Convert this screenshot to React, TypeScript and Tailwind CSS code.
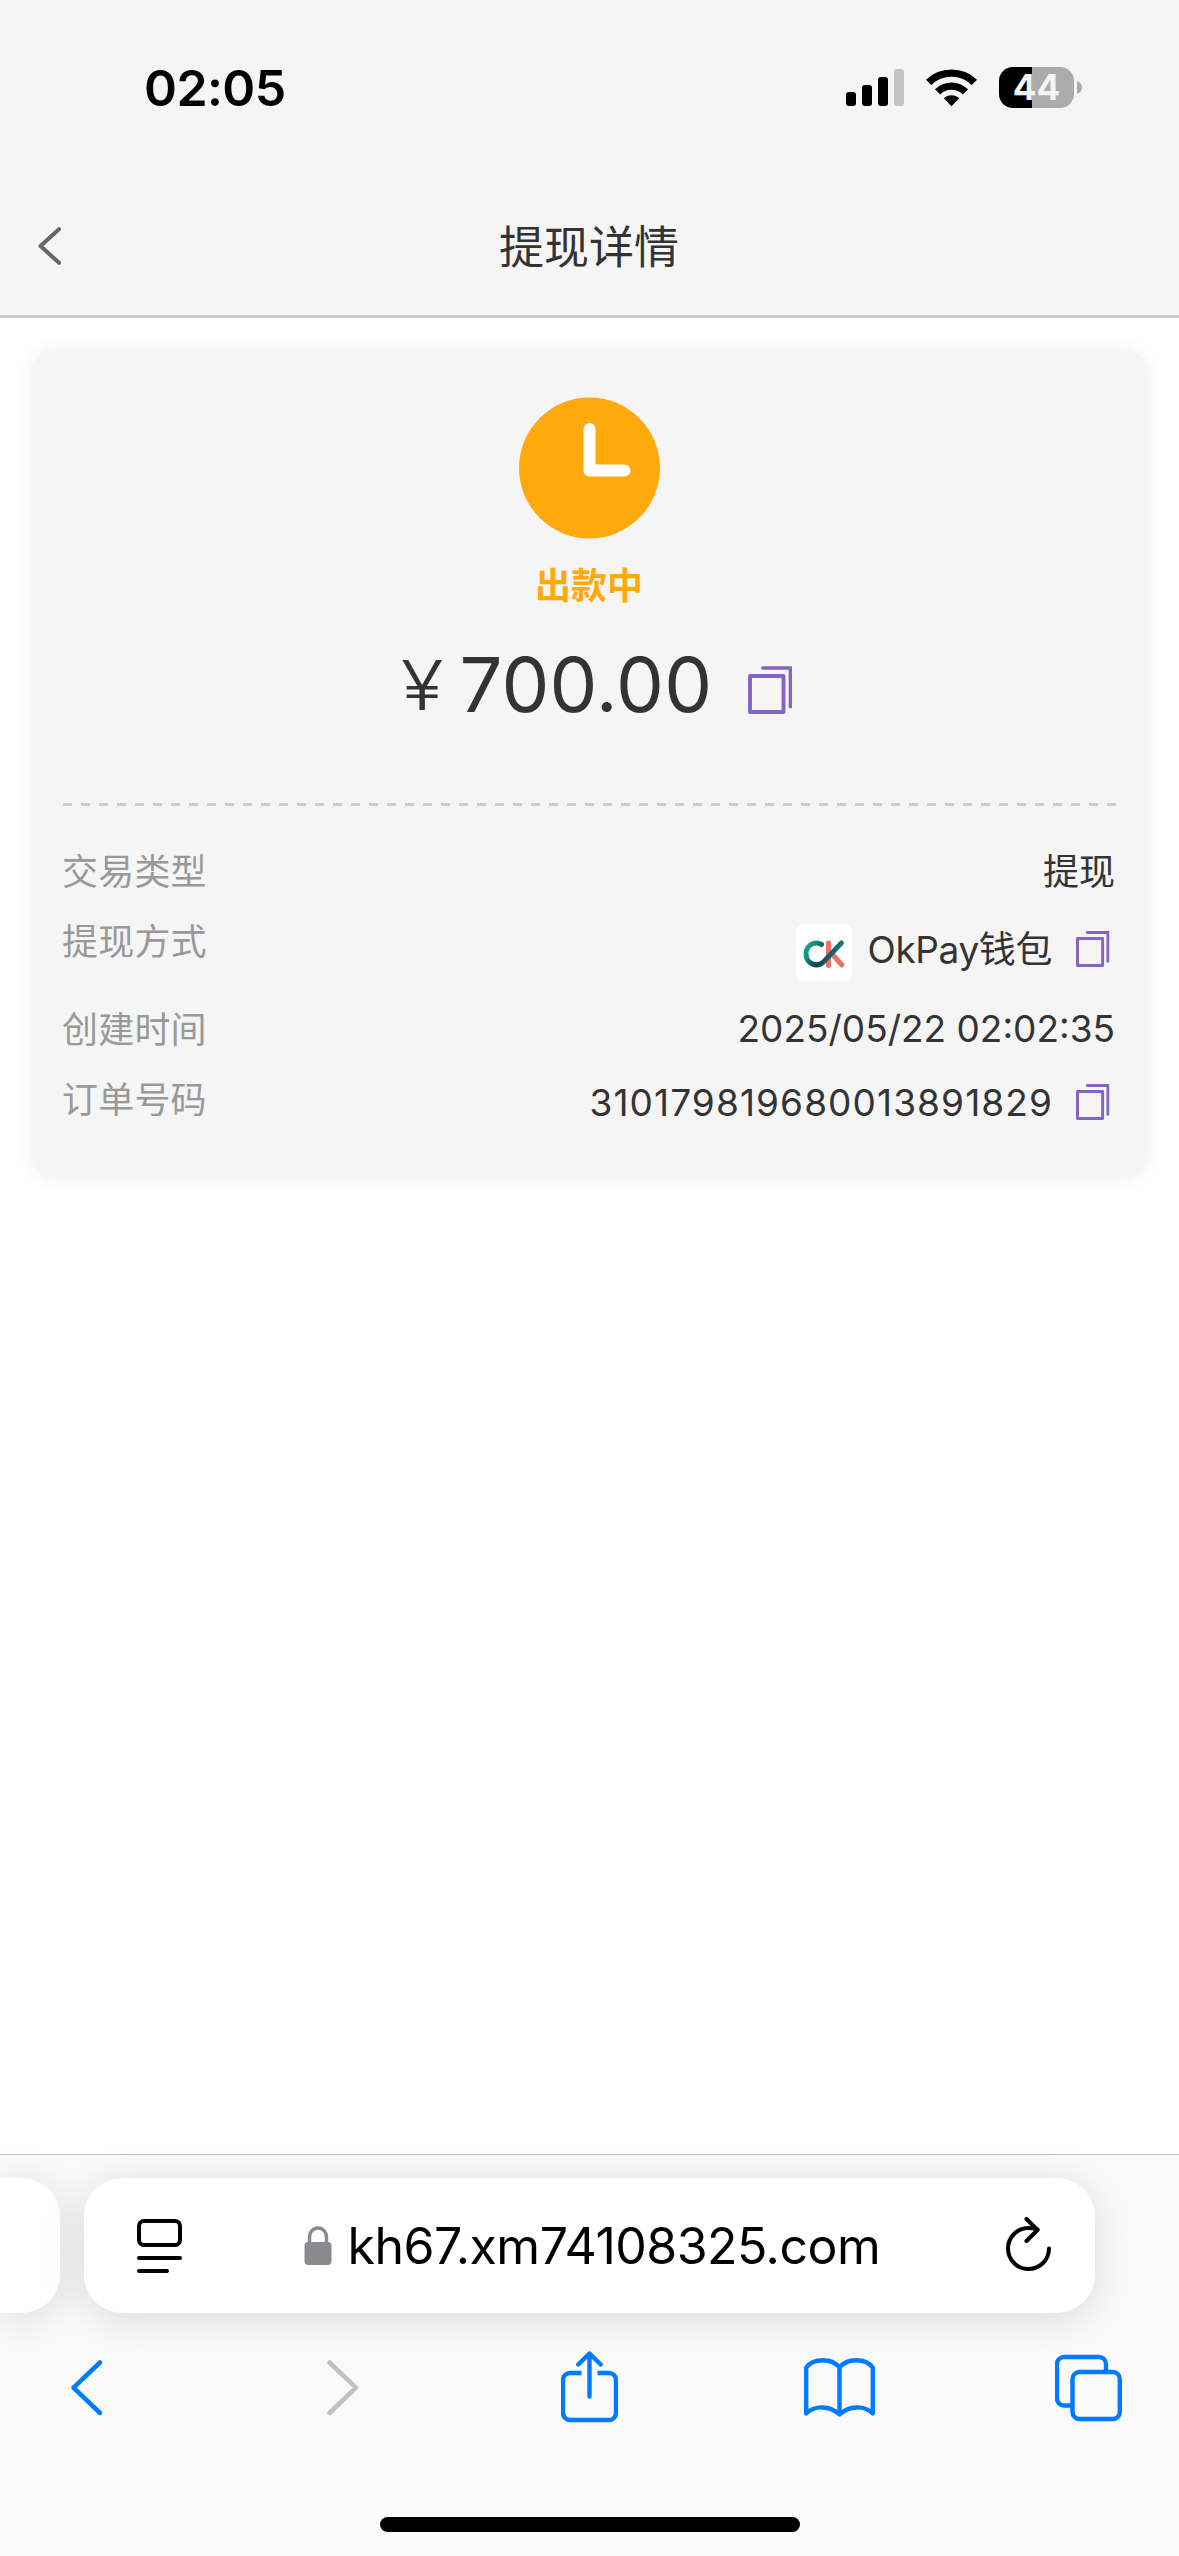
import type { ReactNode } from 'react'

type RowProps = {
  label: string
  className: string
  children: ReactNode
}

type CopyIconProps = {
  className: string
}

const CopyIcon = ({ className }: CopyIconProps) => (
  <svg viewBox="0 0 44 48" fill="none" stroke="#8465c3" className={className}>
    <path d="M2 10h33.500v36H2z" strokeWidth="3.9" strokeLinejoin="round" />
    <path d="M15 2h27.500v38.500" strokeWidth="3.7" strokeLinecap="round" />
  </svg>
)

const OkPayLogo = () => (
  <svg viewBox="0 0 56 57" className="w-14 h-[57px]" fill="none">
    <defs>
      <linearGradient id="ok-c" x1="8" y1="16" x2="48" y2="40" gradientUnits="userSpaceOnUse">
        <stop offset="0" stopColor="#1bb596" />
        <stop offset="0.25" stopColor="#128c80" />
        <stop offset="0.5" stopColor="#0c3f58" />
        <stop offset="0.68" stopColor="#1b6470" />
        <stop offset="1" stopColor="#56c9af" />
      </linearGradient>
    </defs>
    <rect width="56" height="57" rx="7" fill="#fff" />
    <path d="M32.500 19v22.500" stroke="#ee7061" strokeWidth="5" strokeLinecap="round" />
    <path d="M36 30l10 11" stroke="#e9705f" strokeWidth="5" strokeLinecap="round" />
    <path
      d="M25.500 20.500C19 16.500 10 21 10 30c0 10 11 13.500 17 8.500L45.500 19"
      stroke="url(#ok-c)"
      strokeWidth="5"
      strokeLinecap="round"
    />
  </svg>
)

const StatusBar = () => (
  <div className="h-[180px] pt-[57px] pl-[144px] pr-[97px] flex items-start justify-between">
    <span className="text-[50px] leading-[62px] font-semibold text-black tracking-[-0.6px]">
      02:05
    </span>
    <div className="flex items-start mt-2.5">
      <svg viewBox="0 0 58 41" className="w-[58px] h-[41px]">
        <rect x="0" y="25" width="10" height="14" rx="3" />
        <rect x="16" y="18" width="10" height="21" rx="3" />
        <rect x="32" y="10" width="10" height="29" rx="3" />
        <rect x="48" y="2" width="10" height="37" rx="3" fill="#c4c4c4" />
      </svg>
      <svg viewBox="0 0 51 41" className="w-[51px] h-[41px] ml-[22px]">
        <path d="M0 12.800a36.500 36.500 0 0 1 51 0l-5.200 5.200a29 29 0 0 0-40.600 0z" />
        <path d="M9 22.200a23.500 23.500 0 0 1 33 0l-5.200 5.200a16.200 16.200 0 0 0-22.600 0z" />
        <path d="M17.800 31.300a11 11 0 0 1 15.400 0L25.500 39.300z" />
      </svg>
      <div className="ml-[22px] w-[75px] h-[41px] rounded-[14px] bg-[linear-gradient(to_right,#000_33px,#ababab_33px)] flex items-center justify-center">
        <span className="text-[35px] leading-[41px] font-bold text-[#f5f5f5]">44</span>
      </div>
      <svg viewBox="0 0 5 13" className="w-[5px] h-[13px] mt-3.5 ml-[3px]">
        <path d="M0 0c3 1.200 5 3.500 5 6.500S3 11.800 0 13z" fill="#ababab" />
      </svg>
    </div>
  </div>
)

const Header = () => (
  <header className="h-[318px] bg-[#f5f5f5] border-b-3 border-[#cdcdcd]">
    <StatusBar />
    <div className="h-[135px] pl-[37px] grid grid-cols-[60px_1fr_98px] items-center">
      <svg viewBox="0 0 24 38" className="w-6 h-[38px] mb-1" fill="none">
        <path
          d="M22 2.200L3.500 19 22 35.800"
          stroke="#666"
          strokeWidth="4"
          strokeLinecap="round"
          strokeLinejoin="round"
        />
      </svg>
      <h1 className="text-center text-[45px] leading-[60px] text-[#333]">提现详情</h1>
    </div>
  </header>
)

const Row = ({ label, className, children }: RowProps) => (
  <div className={`flex justify-between items-start ${className}`}>
    <span className="-ml-px text-[36px] leading-[56px] tracking-[0.2px] text-[#999]">{label}</span>
    <div className="flex items-center mr-px text-[37px] leading-[54px] text-[#333]">{children}</div>
  </div>
)

const DetailCard = () => (
  <section className="mx-[31px] mt-8 h-[828px] px-8 pt-[47px] rounded-[22px] bg-[#f5f5f5] shadow-[0_0_18px_rgba(0,0,0,0.06)]">
    <div className="flex flex-col items-center">
      <svg viewBox="0 0 142 142" className="w-[142px] h-[142px]" fill="none">
        <circle cx="70.500" cy="71" r="70.500" fill="#ffa90d" />
        <path
          d="M70.500 32V73.500h35"
          stroke="#fff"
          strokeWidth="12"
          strokeLinecap="round"
          strokeLinejoin="round"
        />
      </svg>
      <p className="mt-5 mr-px text-[36px] leading-[54px] font-bold text-[#ffa90d]">出款中</p>
      <div className="mt-6 ml-3.5 h-[100px] flex items-center text-[#333]">
        <span className="mb-1 text-[68px] leading-[90px] font-light origin-left scale-x-115">¥</span>
        <span className="mb-1.5 ml-[22px] text-[76px] leading-[90px] tracking-[0.2px]">700.00</span>
        <CopyIcon className="w-11 h-12 ml-9 mt-1.5" />
      </div>
    </div>
    <div className="mt-[66px] h-[3px] bg-[repeating-linear-gradient(to_right,#cdcdcd_0_9px,transparent_9px_18px)]" />
    <Row label="交易类型" className="mt-[38px] h-[70px]">
      <span className="mt-px text-[36px]">提现</span>
    </Row>
    <Row label="提现方式" className="h-[88px]">
      <div className="mt-2.5">
        <OkPayLogo />
      </div>
      <span className="mt-[5px] ml-4 tracking-[-0.4px]">OkPay钱包</span>
      <CopyIcon className="w-[35px] h-9 ml-[23px] mr-[5px] mt-0.5" />
    </Row>
    <Row label="创建时间" className="h-[70px]">
      <span>2025/05/22 02:02:35</span>
    </Row>
    <Row label="订单号码" className="h-[70px]">
      <span className="mt-1 tracking-[1.1px]">310179819680013891829</span>
      <CopyIcon className="w-[35px] h-9 ml-[22px] mr-[5px] mt-0.5" />
    </Row>
  </section>
)

const AddressBar = () => (
  <div className="pt-[23px] h-[180px] flex gap-6">
    <div className="w-[60px] h-[135px] rounded-r-[38px] bg-white shadow-[0_6px_44px_rgba(0,0,0,0.13)]" />
    <div className="w-[1011px] h-[135px] pl-[53px] pr-11 rounded-[38px] bg-white shadow-[0_6px_44px_rgba(0,0,0,0.13)] flex items-center justify-between">
      <svg
        viewBox="0 0 45 54"
        className="w-[45px] h-[54px]"
        fill="none"
        stroke="#000"
        strokeWidth="4"
        strokeLinecap="round"
      >
        <rect x="2" y="2" width="41" height="24" rx="5" />
        <path d="M2 39h41M2 52h28" />
      </svg>
      <div className="flex items-center mr-1">
        <svg viewBox="0 0 28 39" className="w-7 h-[39px]" fill="none">
          <path d="M5.500 18v-7a8.500 9 0 0 1 17 0v7" stroke="#8a8a8e" strokeWidth="3.500" />
          <rect x="0.500" y="16" width="27" height="23" rx="4" fill="#8a8a8e" />
        </svg>
        <span className="ml-4 text-[50px] leading-[62px] tracking-[-0.5px] text-black">
          kh67.xm74108325.com
        </span>
      </div>
      <svg
        viewBox="0 0 45 54"
        className="w-[45px] h-[54px] mb-1"
        fill="none"
        stroke="#000"
        strokeWidth="4"
        strokeLinecap="round"
        strokeLinejoin="round"
      >
        <path d="M43 31.500a20.500 20.500 0 1 1-20.500-20.500q4.500 0 9 1.500" />
        <path d="M20.500 2l11 11-11 11" />
      </svg>
    </div>
  </div>
)

const Toolbar = () => (
  <nav className="h-[74px] mt-4 pl-[70px] flex items-start">
    <svg viewBox="0 0 34 74" className="w-[34px] h-[74px]" fill="none">
      <path
        d="M30 11.500L3.500 36.700 30 62"
        stroke="#007aff"
        strokeWidth="4.500"
        strokeLinecap="round"
        strokeLinejoin="round"
      />
    </svg>
    <svg viewBox="0 0 34 74" className="ml-[221px] w-[34px] h-[74px]" fill="none">
      <path
        d="M4.500 11.500L31 36.700 4.500 62"
        stroke="#c1c1c2"
        strokeWidth="4.500"
        strokeLinecap="round"
        strokeLinejoin="round"
      />
    </svg>
    <svg
      viewBox="0 0 57 74"
      className="ml-[202px] w-[57px] h-[74px]"
      fill="none"
      stroke="#007aff"
      strokeWidth="4.400"
      strokeLinejoin="round"
    >
      <path d="M20.500 22H9a7 7 0 0 0-7 7v33a7 7 0 0 0 7 7h39a7 7 0 0 0 7-7V29a7 7 0 0 0-7-7H36.500" />
      <path d="M28.500 2.500v43M17.300 13.500L28.500 2.500l11.200 11" strokeLinecap="round" />
    </svg>
    <svg
      viewBox="0 0 71 74"
      className="-mt-px ml-[186px] w-[71px] h-[74px]"
      fill="none"
      stroke="#007aff"
      strokeWidth="4.400"
      strokeLinecap="round"
      strokeLinejoin="round"
    >
      <path d="M35.500 17.500C28 8 10 7.500 2.200 17.500V63.500C11 55 26 55.500 35.500 64.500C45 55.500 60 55 68.800 63.500V17.500C61 7.500 43 8 35.500 17.500z" />
      <path d="M35.500 17.500v46" />
    </svg>
    <svg
      viewBox="0 0 67 74"
      className="-mt-px ml-[180px] w-[67px] h-[74px]"
      fill="none"
      stroke="#007aff"
      strokeWidth="4.400"
    >
      <path d="M16 55.500H9a7 7 0 0 1-7-7V14a7 7 0 0 1 7-7h35a7 7 0 0 1 7 7v7" />
      <rect x="17.500" y="22" width="47.300" height="47" rx="7" />
    </svg>
  </nav>
)

const BrowserBar = () => (
  <footer className="h-[402px] bg-[#fafafa] border-t border-[#bcbcbc] flex flex-col">
    <AddressBar />
    <Toolbar />
    <div className="mt-auto mb-6 mx-auto w-[420px] h-[15px] rounded-full bg-black" />
  </footer>
)

const App = () => (
  <div className="w-[1179px] h-[2556px] bg-white flex flex-col overflow-hidden font-[Inter,'Noto_Sans_CJK_SC',sans-serif]">
    <Header />
    <main className="flex-1">
      <DetailCard />
    </main>
    <BrowserBar />
  </div>
)

export default App
